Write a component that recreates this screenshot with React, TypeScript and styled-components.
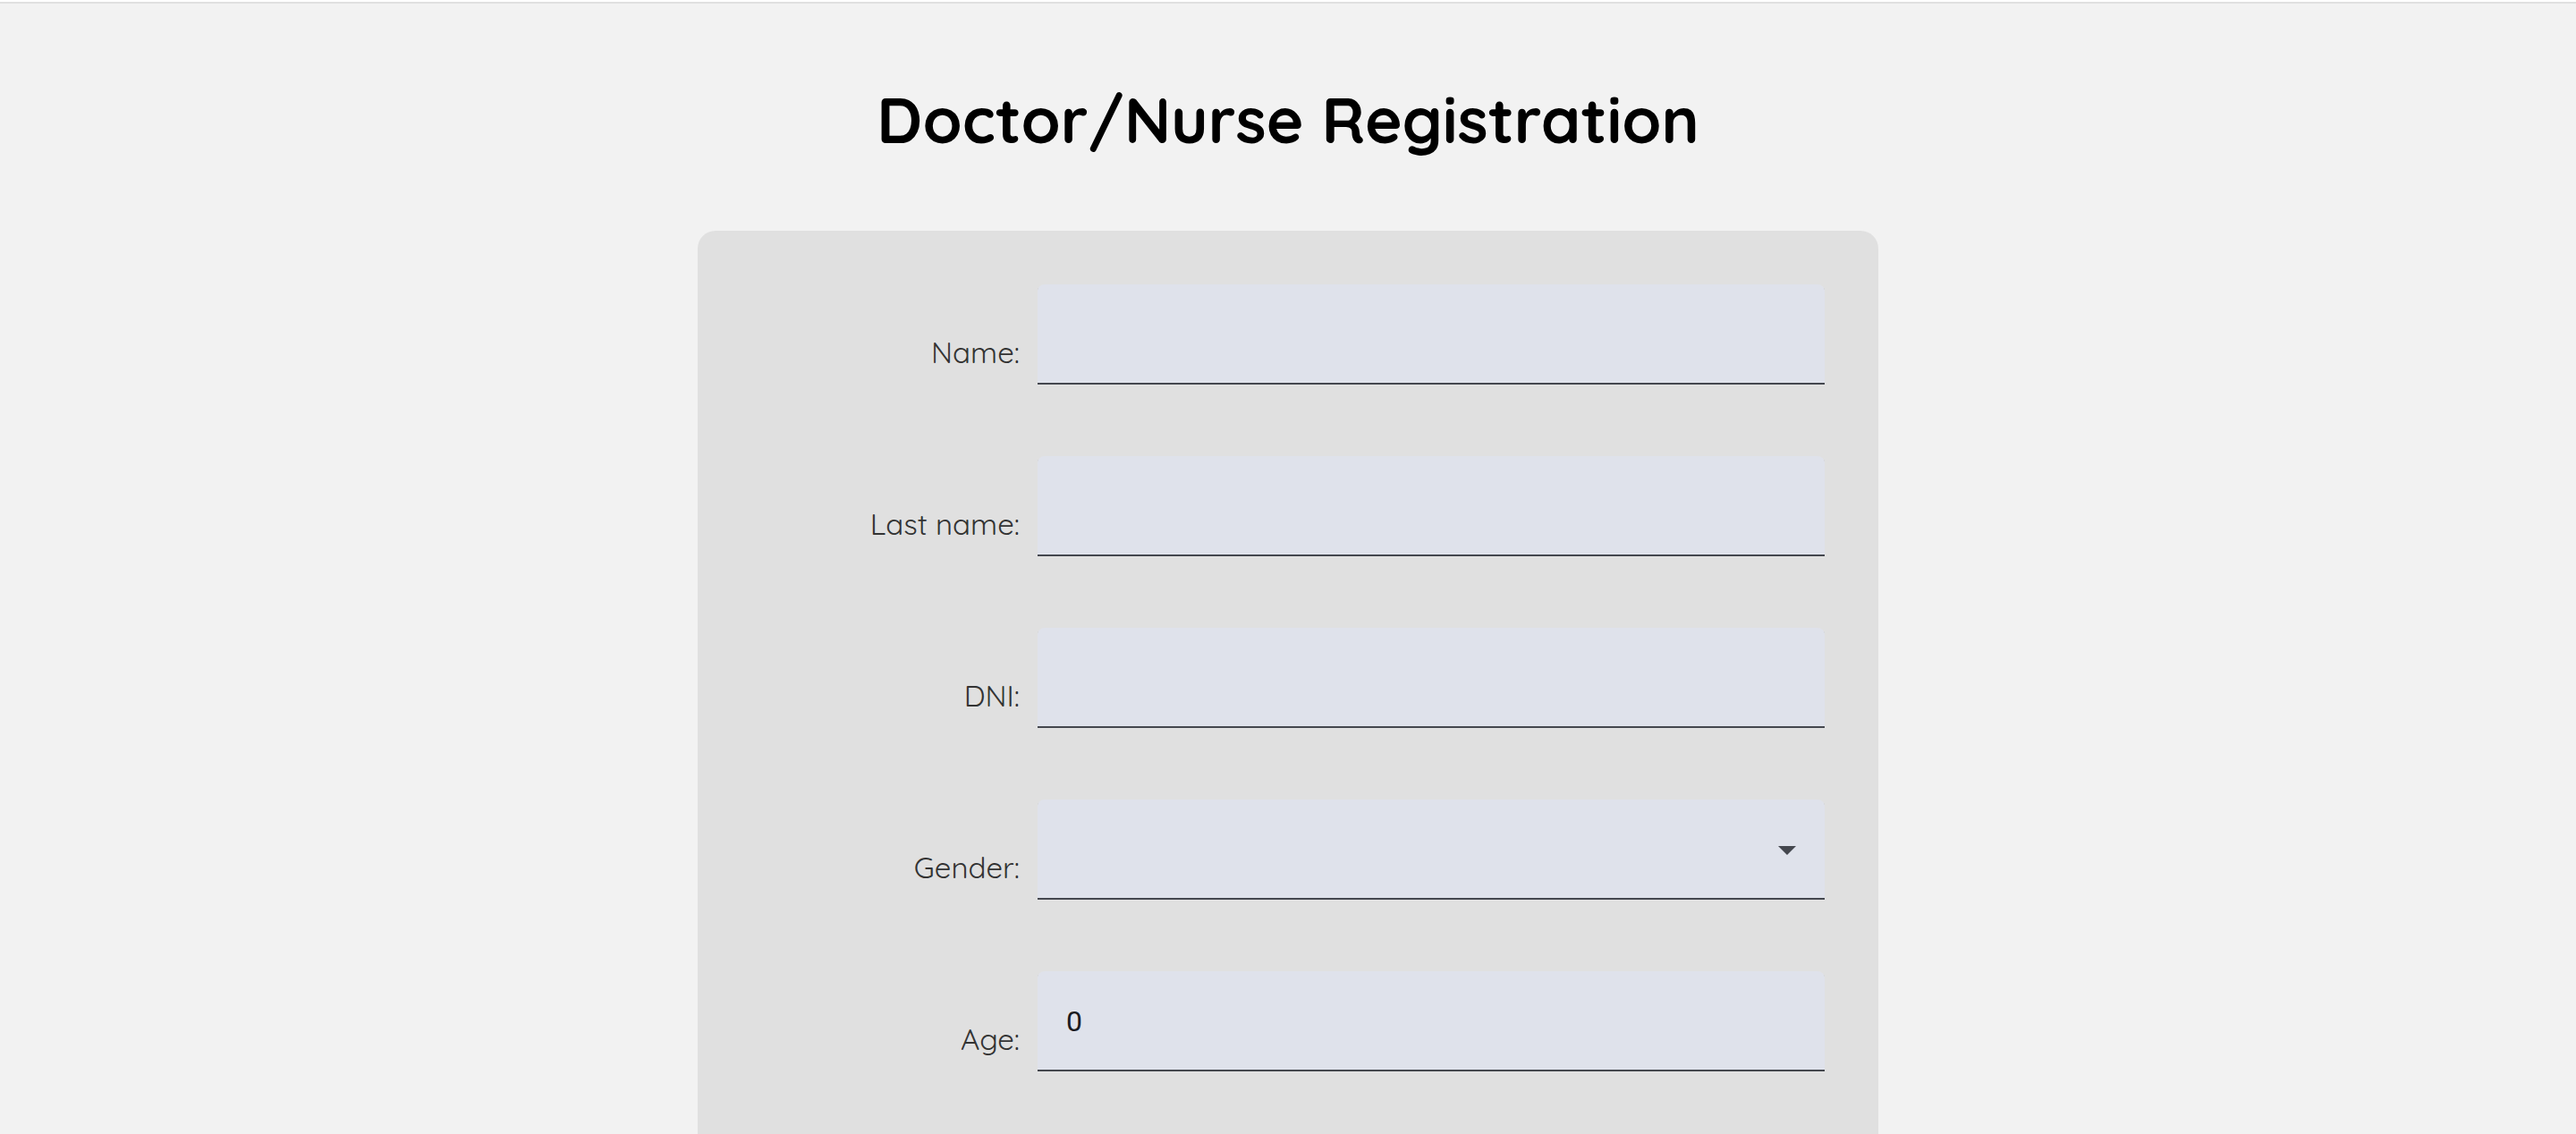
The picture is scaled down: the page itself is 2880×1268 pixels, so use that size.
import React, { useId } from "react";
import styled, { createGlobalStyle } from "styled-components";

const GlobalStyle = createGlobalStyle`
  *, *::before, *::after {
    box-sizing: border-box;
  }

  body {
    margin: 0;
    background: #f2f2f2;
    font-family: Quicksand, Lato, sans-serif;
  }
`;

const Page = styled.div`
  display: flex;
  flex-direction: column;
  align-items: center;
  min-height: 100vh;
`;

const TopBar = styled.header`
  align-self: stretch;
  height: 4px;
  background: #ffffff;
  border-bottom: 2px solid #e0e0e0;
`;

const Title = styled.h1`
  margin: 0;
  padding: 86px 24px 80px;
  color: #000000;
  font-size: 71px;
  font-weight: 700;
  line-height: 88px;
  text-align: center;
`;

const Card = styled.form`
  flex: 1;
  display: flex;
  flex-direction: column;
  gap: 80px;
  width: 100%;
  max-width: 1320px;
  padding: 60px 60px 0;
  background: #e0e0e0;
  border-radius: 20px 20px 0 0;
`;

const Row = styled.div`
  display: flex;
  align-items: flex-end;
  gap: 20px;
`;

const Label = styled.label`
  flex: 1;
  padding-bottom: 16px;
  color: #333333;
  font-size: 33px;
  line-height: 40px;
  text-align: right;
`;

const Field = styled.div`
  display: grid;
  align-items: center;
  width: 880px;
  height: 112px;
  background: #dfe2eb;
  box-shadow: inset 0 -2px 0 #44474e;
  border-radius: 8px 8px 0 0;
`;

const controlStyle = `
  grid-area: 1 / 1;
  width: 100%;
  height: 100%;
  padding: 0 32px;
  border: 0;
  outline: 0;
  appearance: none;
  background: transparent;
  color: #1a1b1f;
  font-family: Roboto, sans-serif;
  font-size: 32px;
`;

const Input = styled.input`
  ${controlStyle}

  &::-webkit-inner-spin-button {
    display: none;
  }
`;

const Select = styled.select`
  ${controlStyle}
`;

const Arrow = styled.svg`
  grid-area: 1 / 1;
  justify-self: end;
  width: 48px;
  height: 48px;
  margin-right: 18px;
  fill: #44474e;
  pointer-events: none;
`;

type TextRowProps = { label: string; type?: string; value?: string };

function TextRow({ label, type = "text", value = "" }: TextRowProps) {
  const id = useId();
  return (
    <Row>
      <Label htmlFor={id}>{label}</Label>
      <Field>
        <Input id={id} type={type} defaultValue={value} />
      </Field>
    </Row>
  );
}

function SelectRow({ label, options }: { label: string; options: string[] }) {
  const id = useId();
  return (
    <Row>
      <Label htmlFor={id}>{label}</Label>
      <Field>
        <Select id={id} defaultValue="">
          {options.map((option) => (
            <option key={option} value={option}>
              {option}
            </option>
          ))}
        </Select>
        <Arrow viewBox="0 0 24 24" aria-hidden="true">
          <path d="M7 10l5 5 5-5z" />
        </Arrow>
      </Field>
    </Row>
  );
}

export default function App() {
  return (
    <>
      <GlobalStyle />
      <Page>
        <TopBar />
        <Title>Doctor/Nurse Registration</Title>
        <Card>
          <TextRow label="Name:" />
          <TextRow label="Last name:" />
          <TextRow label="DNI:" />
          <SelectRow label="Gender:" options={[""]} />
          <TextRow label="Age:" type="number" value="0" />
        </Card>
      </Page>
    </>
  );
}
